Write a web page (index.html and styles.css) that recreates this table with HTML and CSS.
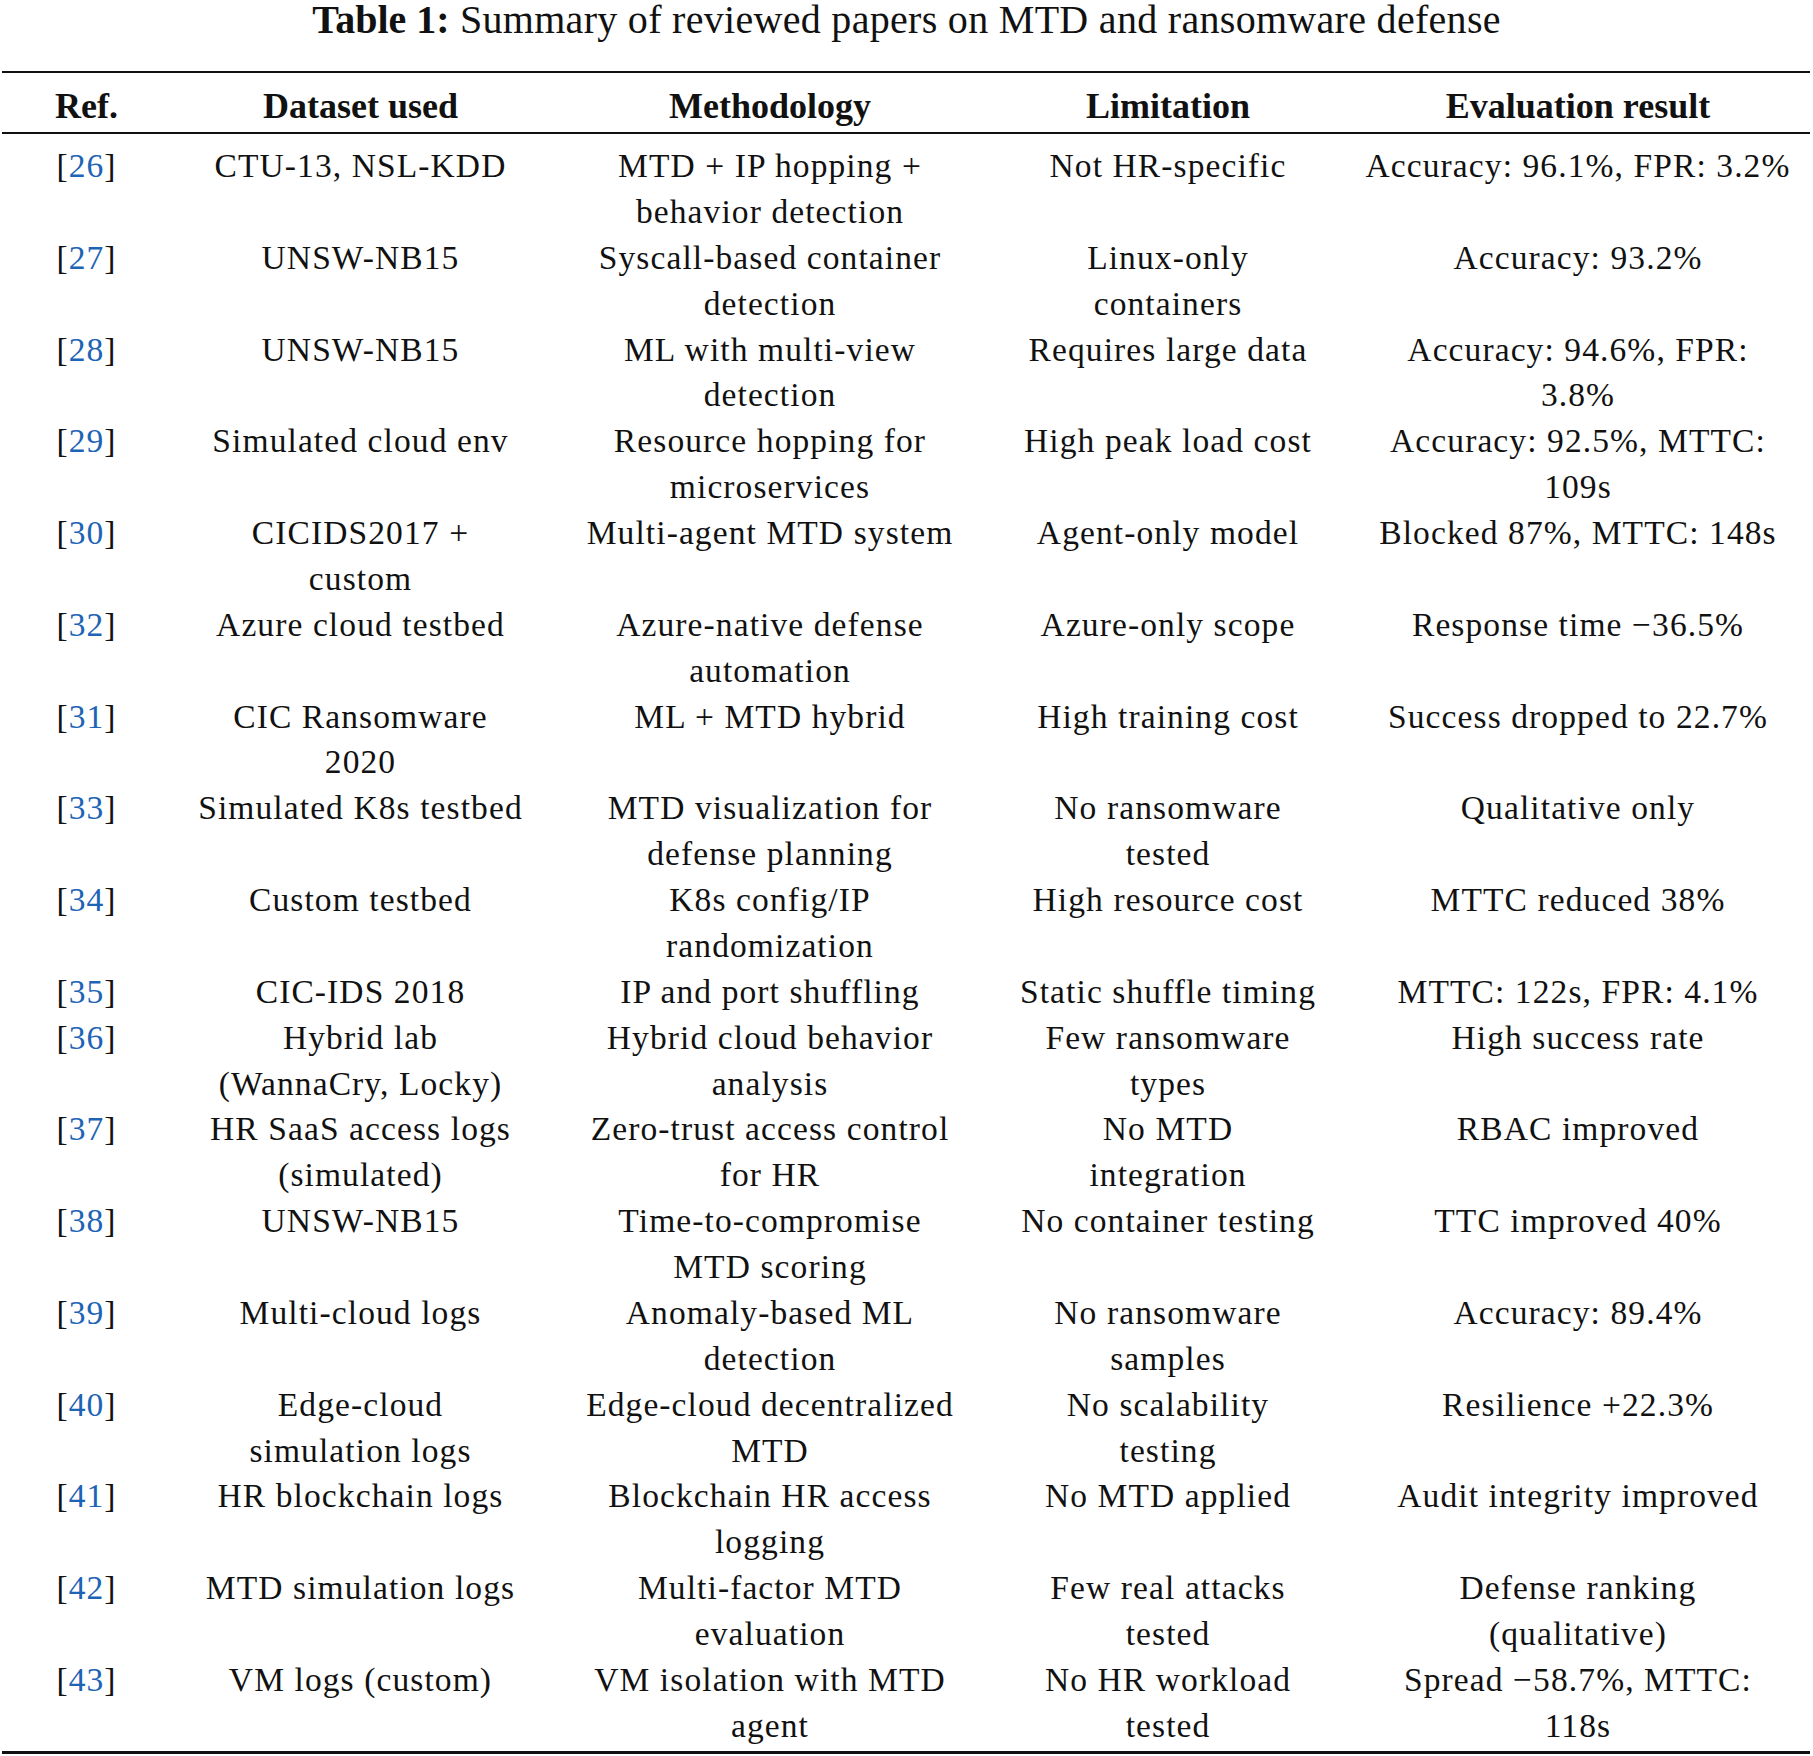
FILE: index.html
```html
<!DOCTYPE html>
<html lang="en">
<head>
<meta charset="utf-8">
<title>Table 1</title>
<link rel="stylesheet" href="styles.css">
</head>
<body>
<div class="caption"><b>Table 1:</b> Summary of reviewed papers on MTD and ransomware defense</div>
<table class="summary">
<colgroup>
<col class="c-ref"><col class="c-data"><col class="c-meth"><col class="c-lim"><col class="c-eval">
</colgroup>
<thead>
<tr><th>Ref.</th><th>Dataset used</th><th>Methodology</th><th>Limitation</th><th>Evaluation result</th></tr>
</thead>
<tbody>
<tr><td>[<span class="cite">26</span>]</td><td>CTU-13, NSL-KDD</td><td>MTD + IP hopping +<br>behavior detection</td><td>Not HR-specific</td><td>Accuracy: 96.1%, FPR: 3.2%</td></tr>
<tr><td>[<span class="cite">27</span>]</td><td>UNSW-NB15</td><td>Syscall-based container<br>detection</td><td>Linux-only<br>containers</td><td>Accuracy: 93.2%</td></tr>
<tr><td>[<span class="cite">28</span>]</td><td>UNSW-NB15</td><td>ML with multi-view<br>detection</td><td>Requires large data</td><td>Accuracy: 94.6%, FPR:<br>3.8%</td></tr>
<tr><td>[<span class="cite">29</span>]</td><td>Simulated cloud env</td><td>Resource hopping for<br>microservices</td><td>High peak load cost</td><td>Accuracy: 92.5%, MTTC:<br>109s</td></tr>
<tr><td>[<span class="cite">30</span>]</td><td>CICIDS2017 +<br>custom</td><td>Multi-agent MTD system</td><td>Agent-only model</td><td>Blocked 87%, MTTC: 148s</td></tr>
<tr><td>[<span class="cite">32</span>]</td><td>Azure cloud testbed</td><td>Azure-native defense<br>automation</td><td>Azure-only scope</td><td>Response time −36.5%</td></tr>
<tr><td>[<span class="cite">31</span>]</td><td>CIC Ransomware<br>2020</td><td>ML + MTD hybrid</td><td>High training cost</td><td>Success dropped to 22.7%</td></tr>
<tr><td>[<span class="cite">33</span>]</td><td>Simulated K8s testbed</td><td>MTD visualization for<br>defense planning</td><td>No ransomware<br>tested</td><td>Qualitative only</td></tr>
<tr><td>[<span class="cite">34</span>]</td><td>Custom testbed</td><td>K8s config/IP<br>randomization</td><td>High resource cost</td><td>MTTC reduced 38%</td></tr>
<tr><td>[<span class="cite">35</span>]</td><td>CIC-IDS 2018</td><td>IP and port shuffling</td><td>Static shuffle timing</td><td>MTTC: 122s, FPR: 4.1%</td></tr>
<tr><td>[<span class="cite">36</span>]</td><td>Hybrid lab<br>(WannaCry, Locky)</td><td>Hybrid cloud behavior<br>analysis</td><td>Few ransomware<br>types</td><td>High success rate</td></tr>
<tr><td>[<span class="cite">37</span>]</td><td>HR SaaS access logs<br>(simulated)</td><td>Zero-trust access control<br>for HR</td><td>No MTD<br>integration</td><td>RBAC improved</td></tr>
<tr><td>[<span class="cite">38</span>]</td><td>UNSW-NB15</td><td>Time-to-compromise<br>MTD scoring</td><td>No container testing</td><td>TTC improved 40%</td></tr>
<tr><td>[<span class="cite">39</span>]</td><td>Multi-cloud logs</td><td>Anomaly-based ML<br>detection</td><td>No ransomware<br>samples</td><td>Accuracy: 89.4%</td></tr>
<tr><td>[<span class="cite">40</span>]</td><td>Edge-cloud<br>simulation logs</td><td>Edge-cloud decentralized<br>MTD</td><td>No scalability<br>testing</td><td>Resilience +22.3%</td></tr>
<tr><td>[<span class="cite">41</span>]</td><td>HR blockchain logs</td><td>Blockchain HR access<br>logging</td><td>No MTD applied</td><td>Audit integrity improved</td></tr>
<tr><td>[<span class="cite">42</span>]</td><td>MTD simulation logs</td><td>Multi-factor MTD<br>evaluation</td><td>Few real attacks<br>tested</td><td>Defense ranking<br>(qualitative)</td></tr>
<tr><td>[<span class="cite">43</span>]</td><td>VM logs (custom)</td><td>VM isolation with MTD<br>agent</td><td>No HR workload<br>tested</td><td>Spread −58.7%, MTTC:<br>118s</td></tr>
</tbody>
</table>
</body>
</html>
```

FILE: styles.css
```css
html, body {
  margin: 0;
  padding: 0;
  background: #ffffff;
}

body {
  font-family: "Liberation Serif", "Times New Roman", serif;
  color: #111111;
}

.caption {
  font-size: 40px;
  line-height: 40px;
  letter-spacing: 0.3px;
  text-align: center;
  margin: 0 0 31px 0;
}

.caption b {
  font-weight: bold;
  letter-spacing: 0;
}

.summary {
  width: 1808px;
  margin-left: 2px;
  table-layout: fixed;
  border-collapse: separate;
  border-spacing: 0;
}

.c-ref { width: 169px; }
.c-data { width: 379px; }
.c-meth { width: 440px; }
.c-lim { width: 356px; }
.c-eval { width: 464px; }

.summary th {
  font-size: 36px;
  font-weight: bold;
  line-height: 46px;
  text-align: center;
  white-space: nowrap;
  padding: 10px 0 3px 0;
  border-top: 2px solid #111111;
  border-bottom: 2px solid #111111;
}

.summary td {
  font-size: 33.5px;
  letter-spacing: 1.1px;
  line-height: 45.87px;
  text-align: center;
  vertical-align: top;
  white-space: nowrap;
  padding: 0;
}

.summary tbody tr:first-child td {
  padding-top: 9px;
}

.summary tbody tr:last-child td {
  padding-bottom: 2.5px;
  border-bottom: 3px solid #111111;
}

.cite {
  color: #1d64b5;
}
```
